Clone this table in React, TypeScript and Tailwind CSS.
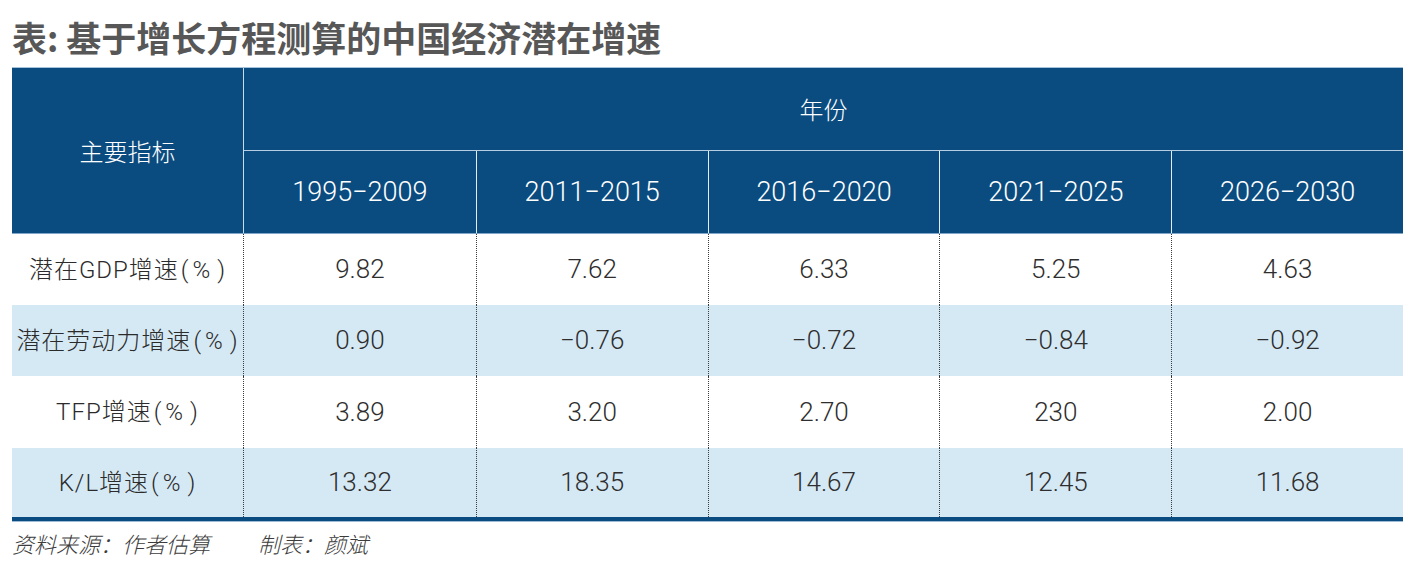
import React from "react";

const years = ["1995-2009", "2011-2015", "2016-2020", "2021-2025", "2026-2030"];

const rows: { label: string; values: string[]; bg: string; h: string }[] = [
  { label: "潜在GDP增速", values: ["9.82", "7.62", "6.33", "5.25", "4.63"], bg: "bg-white", h: "h-[71px]" },
  { label: "潜在劳动力增速", values: ["0.90", "−0.76", "−0.72", "−0.84", "−0.92"], bg: "bg-[#d5e9f5]", h: "h-[71px]" },
  { label: "TFP增速", values: ["3.89", "3.20", "2.70", "230", "2.00"], bg: "bg-white", h: "h-[72px]" },
  { label: "K/L增速", values: ["13.32", "18.35", "14.67", "12.45", "11.68"], bg: "bg-[#d5e9f5]", h: "h-[69px]" },
];

const num = "font-['Roboto','Liberation_Sans',sans-serif] font-light";

export default function App() {
  return (
    <div className="w-[1419px] h-[578px] bg-white overflow-hidden">
      <div className="pl-[12px] pt-[19px]">
        <h1 className="font-['Noto_Sans_CJK_SC',sans-serif] font-bold text-[35px] leading-[35px] text-[#575757]">
          表: 基于增长方程测算的中国经济潜在增速
        </h1>
        <div className="mt-[13px] w-[1391px]">
          {/* Header */}
          <div className="grid grid-cols-[232px_repeat(5,minmax(0,1fr))] bg-[#0b4c80] border-t border-[#a6c2da] border-b border-b-[#7fa6c8] text-white">
            <div className="row-span-2 flex items-center justify-center border-r border-[#c9dbe9] text-[24px] font-['Noto_Sans_CJK_SC',sans-serif] font-light">
              主要指标
            </div>
            <div className="col-span-5 h-[83px] flex items-center justify-center border-b border-[#b7cee2] text-[24px] font-['Noto_Sans_CJK_SC',sans-serif] font-light">
              年份
            </div>
            {years.map((y, i) => (
              <div
                key={y}
                className={`h-[82px] flex items-center justify-center text-[27px] ${num} ${i > 0 ? "border-l border-[#e3ecf4]" : ""}`}
              >
                {y.split("-")[0]}
                <span>−</span>
                {y.split("-")[1]}
              </div>
            ))}
          </div>
          {/* Body */}
          {rows.map((r) => (
            <div key={r.label} className={`grid grid-cols-[232px_repeat(5,minmax(0,1fr))] ${r.bg} ${r.h}`}>
              <div className="flex items-center justify-center border-r border-dotted border-[#3c3c3c] text-[24px] tracking-[1px] text-[#2b2b2b] font-['Roboto','Noto_Sans_CJK_SC',sans-serif] font-light">
                <span>{r.label}</span>
                <span className="ml-[2px]">(</span>
                <span className="ml-[3px]">%</span>
                <span className="ml-[6px]">)</span>
              </div>
              {r.values.map((v, i) => (
                <div
                  key={i}
                  className={`flex items-center justify-center text-[26px] text-[#2e2e2e] ${num} ${i > 0 ? "border-l border-dotted border-[#3c3c3c]" : ""}`}
                >
                  {v}
                </div>
              ))}
            </div>
          ))}
          <div className="h-[4px] bg-[#0b4c80]"></div>
          <div className="h-[1px] bg-[#9dbbd4]"></div>
        </div>
        <div className="mt-[9px] flex text-[22px] leading-[24px] italic text-[#3c3c3c] font-['Noto_Sans_CJK_SC',sans-serif] font-light">
          <span>资料来源：作者估算</span>
          <span className="ml-[48px]">制表：颜斌</span>
        </div>
      </div>
    </div>
  );
}
